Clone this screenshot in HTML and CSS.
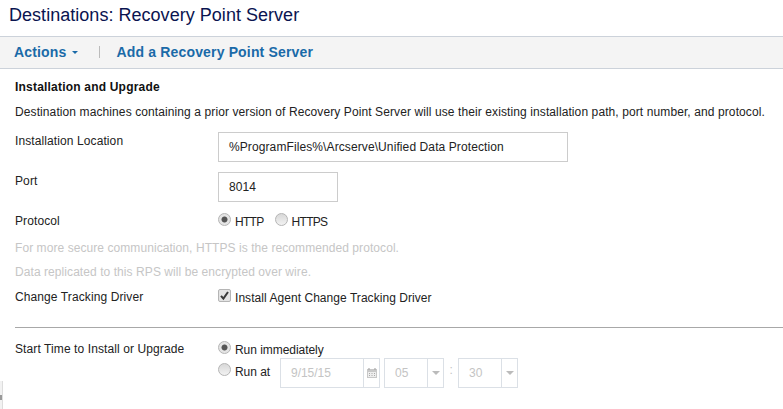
FILE: index.html
```html
<!DOCTYPE html>
<html lang="en">
<head>
<meta charset="utf-8">
<title>Destinations: Recovery Point Server</title>
<link rel="stylesheet" href="styles.css">
</head>
<body>
<header class="title-bar"><h1>Destinations: Recovery Point Server</h1></header>
<nav class="toolbar">
  <span class="tool-link">Actions <span class="caret"></span></span>
  <span class="divider"></span>
  <span class="tool-link">Add a Recovery Point Server</span>
</nav>
<main class="content">
  <h2>Installation and Upgrade</h2>
  <p class="intro">Destination machines containing a prior version of Recovery Point Server will use their existing installation path, port number, and protocol.</p>
  <div class="row row-location">
    <span class="label">Installation Location</span>
    <span class="input input-wide">%ProgramFiles%\Arcserve\Unified Data Protection</span>
  </div>
  <div class="row row-port">
    <span class="label">Port</span>
    <span class="input input-port">8014</span>
  </div>
  <div class="row row-protocol">
    <span class="label">Protocol</span>
    <span class="options protocol">
      <span class="radio on"></span><span class="opt">HTTP</span>
      <span class="radio second"></span><span class="opt">HTTPS</span>
    </span>
  </div>
  <p class="note note-one">For more secure communication, HTTPS is the recommended protocol.</p>
  <p class="note note-two">Data replicated to this RPS will be encrypted over wire.</p>
  <div class="row row-driver">
    <span class="label">Change Tracking Driver</span>
    <span class="options driver">
      <span class="check"><svg viewBox="0 0 13 13" width="13" height="13"><path d="M3 6.800l2.400 2.800L10 3" fill="none" stroke="#3a3a3a" stroke-width="2"/></svg></span><span class="opt">Install Agent Change Tracking Driver</span>
    </span>
  </div>
  <hr class="rule">
  <div class="row row-start">
    <span class="label">Start Time to Install or Upgrade</span>
    <div class="start-options">
      <div class="options run-now"><span class="radio on"></span><span class="opt">Run immediately</span></div>
      <div class="options run-at">
        <span class="radio"></span><span class="opt">Run at</span>
        <span class="picker date"><span class="val">9/15/15</span><span class="trigger">
          <svg viewBox="0 0 12 12" width="12" height="12"><path d="M1 2h10v9H1z" fill="#c8c8c8"/><path d="M3 1v2M9 1v2" stroke="#aaa" stroke-width="1.2"/><path d="M2 5h8v5H2z" fill="#eee"/><path d="M3 6h1v1H3zM5.500 6h1v1h-1zM8 6h1v1H8zM3 8h1v1H3zM5.500 8h1v1h-1zM8 8h1v1H8z" fill="#aaa"/></svg>
        </span></span>
        <span class="picker time"><span class="val">05</span><span class="trigger"><span class="arrow"></span></span></span>
        <span class="colon">:</span>
        <span class="picker time"><span class="val">30</span><span class="trigger"><span class="arrow"></span></span></span>
      </div>
    </div>
  </div>
</main>
<span class="edge-tab"><span class="edge-mark"></span></span>
</body>
</html>
```
FILE: styles.css
```css
* { box-sizing: border-box; }
html, body { margin: 0; padding: 0; }
body {
  width: 783px;
  height: 409px;
  overflow: hidden;
  position: relative;
  background: #fff;
  color: #222;
  font-family: "Liberation Sans", Arial, sans-serif;
  font-size: 12px;
  letter-spacing: .1px;
}
.title-bar { height: 36px; padding: 5px 0 0 9px; }
h1 { margin: 0; font-size: 18px; line-height: 20px; font-weight: 400; color: #0a1450; letter-spacing: .03px; }
.toolbar {
  height: 33px;
  display: flex;
  align-items: center;
  padding: 0 0 2px 14px;
  background: #f4f4f4;
  border-top: 1px solid #ccd2da;
  border-bottom: 1px solid #ccd2da;
}
.tool-link { font-size: 14px; font-weight: 700; color: #1a6aa8; letter-spacing: .16px; }
.caret {
  display: inline-block;
  vertical-align: middle;
  margin-left: 1px;
  border-left: 3px solid transparent;
  border-right: 3px solid transparent;
  border-top: 3px solid #1a6aa8;
}
.divider { width: 1px; height: 12px; background: #bbb; margin: 0 17px 0 21px; }
.content { padding: 0 0 0 15px; }
h2 { margin: 0; padding-top: 11px; font-size: 12px; line-height: 14px; font-weight: 700; color: #111; letter-spacing: .2px; }
.intro { margin: 11px 0 0; line-height: 14px; white-space: nowrap; }
.row { display: flex; }
.label { width: 203px; flex: none; line-height: 14px; }
.input {
  display: block;
  height: 30px;
  padding: 0 10px;
  line-height: 28px;
  background: #fff;
  border: 1px solid #ccc;
}
.input-wide { width: 350px; }
.input-port { width: 120px; }
.row-location { margin-top: 13px; }
.row-location .label { padding-top: 2px; }
.row-port { margin-top: 10px; }
.row-port .label { padding-top: 2px; }
.row-protocol { margin-top: 12px; }
.options { display: flex; align-items: center; height: 14px; }
.protocol { letter-spacing: -.7px; }
.driver { letter-spacing: .05px; }
.radio {
  width: 13px;
  height: 13px;
  flex: none;
  border-radius: 50%;
  border: 1px solid #b5b5b5;
  background: linear-gradient(#d8d8d8, #f2f2f2);
  margin-top: -4px;
}
.radio.on { background: radial-gradient(circle, #555 0 2.6px, #e4e4e4 3.4px); }
.radio.second { margin-left: 11px; }
.opt { margin-left: 4px; margin-top: 2px; }
.note { margin: 0; line-height: 14px; color: #c6c6c6; letter-spacing: .07px; }
.note-one { margin-top: 13px; }
.note-two { margin-top: 10px; }
.row-driver { margin-top: 11px; }
.check {
  width: 13px;
  height: 13px;
  flex: none;
  margin-top: -4px;
  border: 1px solid #b5b5b5;
  border-radius: 2px;
  background: #e4e4e4;
  display: flex;
}
.check svg { margin: -1px; flex: none; }
.rule { margin: 23px 0 0; border: 0; border-top: 1px solid #a8a8a8; }
.row-start { margin-top: 14px; }
.start-options { display: flex; flex-direction: column; letter-spacing: -.05px; }
.run-now { height: 14px; }
.run-at { height: 30px; }
.picker {
  display: flex;
  height: 30px;
  flex: none;
  border: 1px solid #dbe0e6;
  color: #c4c4c4;
  line-height: 28px;
  margin-top: 4px;
}
.val { padding-left: 10px; }
.date { width: 100px; margin-left: 10px; }
.date .val { width: 82px; }
.time { width: 60px; margin-left: 4px; }
.time .val { width: 42px; }
.trigger {
  flex: 1;
  display: flex;
  align-items: center;
  justify-content: center;
  border-left: 1px solid #dbe0e6;
}
.arrow {
  border-left: 4px solid transparent;
  border-right: 4px solid transparent;
  border-top: 4px solid #bbb;
}
.colon { width: 14px; color: #c4c4c4; text-align: center; margin-top: -2px; }
.colon + .time { margin-left: 0; }
.edge-tab {
  position: absolute;
  left: 0;
  top: 381px;
  width: 3px;
  height: 28px;
  background: #f2f2f2;
  border-right: 1px solid #ddd;
}
.edge-mark { display: block; margin-top: 14px; width: 2px; height: 5px; background: #999; }
```
